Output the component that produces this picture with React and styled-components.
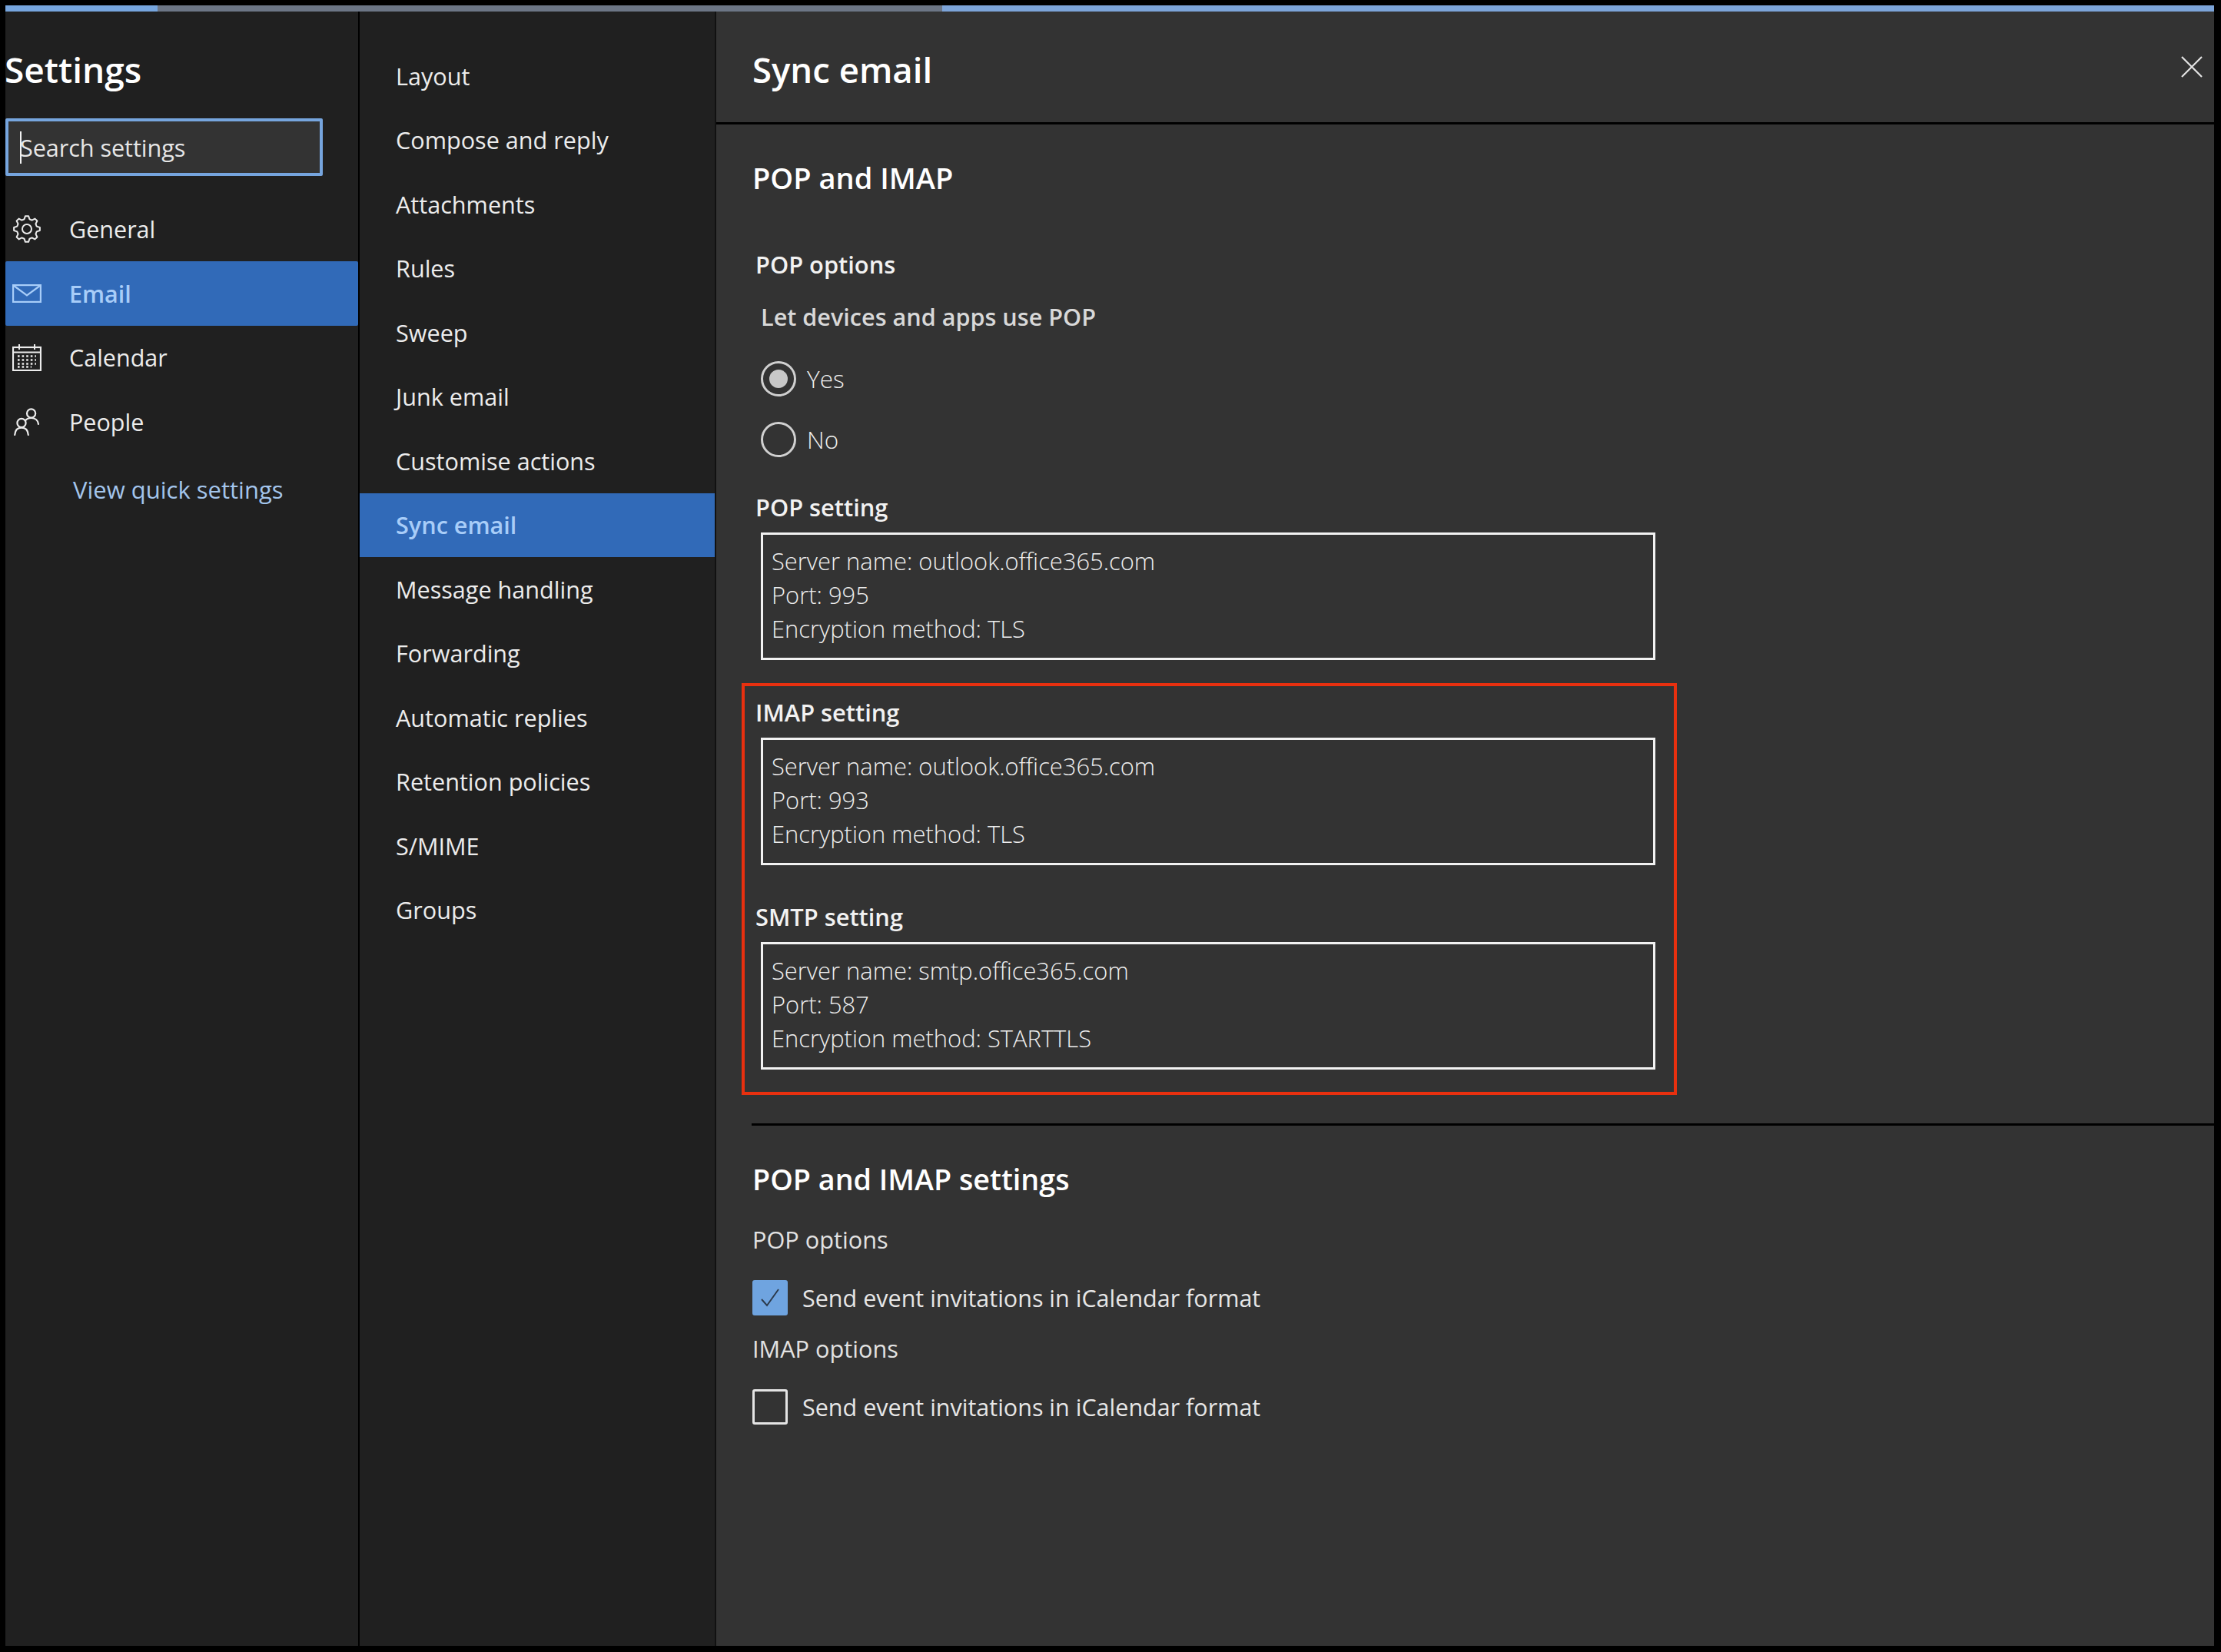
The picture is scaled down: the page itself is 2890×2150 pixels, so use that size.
import React from "react";
import styled, { createGlobalStyle } from "styled-components";

const Global = createGlobalStyle`
  html, body { margin: 0; padding: 0; background: #000; }
  body { font-family: "Open Sans", "Noto Sans", sans-serif; color: #eee; -webkit-font-smoothing: antialiased; }
  * { box-sizing: border-box; }
`;

const Frame = styled.div`
  width: 2874px;
  height: 2135px;
  margin: 7px 9px 8px 7px;
  display: flex;
  flex-direction: column;
  overflow: hidden;
`;
const ProgressBar = styled.div`
  display: flex;
  height: 8px;
  flex: none;
`;
const ProgressPart = styled.div`
  flex: ${p => (p.$w ? `0 0 ${p.$w}px` : 1)};
  background: ${p => p.$c};
`;
const Columns = styled.div`
  flex: 1;
  display: flex;
  min-height: 0;
`;
const Sidebar = styled.aside`
  flex: 0 0 461px;
  background: #202020;
  border-right: 2px solid #000;
  padding-top: 45px;
`;
const SettingsTitle = styled.h1`
  margin: 0;
  font-size: 46px;
  line-height: 60px;
  font-weight: 600;
  color: #fff;
  white-space: nowrap;
  position: relative;
  left: -1px;
`;
const SearchBox = styled.div`
  position: relative;
  width: 413px;
  height: 75px;
  margin-top: 34px;
  padding-left: 15px;
  display: flex;
  align-items: center;
  background: #333;
  border: 4px solid #76a5de;
  border-radius: 2px;
  font-size: 30.7px;
  letter-spacing: -0.1px;
  color: #e6e6e6;
`;
const Caret = styled.span`
  position: absolute;
  left: 15px;
  top: 13px;
  width: 2px;
  height: 42px;
  background: #f2f2f2;
`;
const PrimaryNav = styled.nav`
  margin-top: 27.5px;
`;
const NavRow = styled.div`
  height: 83.5px;
  display: flex;
  align-items: center;
  gap: 36px;
  padding-left: 9px;
  font-size: 30.5px;
  border-radius: 2px;
  background: ${p => (p.$active ? "#316ab8" : "transparent")};
  color: ${p => (p.$active ? "#a8cdf8" : "#ececec")};
  font-weight: ${p => (p.$active ? 600 : 400)};
  white-space: nowrap;
`;
const IconSlot = styled.span`
  flex: 0 0 38px;
  width: 38px;
  height: 40px;
  display: flex;
  align-items: center;
  justify-content: center;
  color: inherit;
  & svg { display: block; }
`;
const QuickLink = styled.div`
  height: 83.5px;
  margin-top: 5px;
  padding-left: 88px;
  display: flex;
  align-items: center;
  font-size: 31px;
  color: #a3c5ec;
  white-space: nowrap;
`;
const SubNav = styled.nav`
  flex: 0 0 462px;
  background: #202020;
  padding-top: 42px;
`;
const SubRow = styled.div`
  height: 83.5px;
  padding-left: 47px;
  display: flex;
  align-items: center;
  font-size: 30.6px;
  background: ${p => (p.$active ? "#316ab8" : "transparent")};
  color: ${p => (p.$active ? "#a8cdf8" : "#ececec")};
  font-weight: ${p => (p.$active ? 600 : 400)};
  white-space: nowrap;
`;
const Main = styled.main`
  flex: 1;
  min-width: 0;
  background: #333;
  border-left: 2px solid #111;
  color: #eaeaea;
`;
const MainHeader = styled.header`
  height: 147px;
  padding: 43px 15px 0 47px;
  display: flex;
  align-items: flex-start;
  justify-content: space-between;
  border-bottom: 3px solid #000;
`;
const MainTitle = styled.h2`
  margin: 0;
  font-size: 45.5px;
  line-height: 64px;
  font-weight: 600;
  color: #fff;
`;
const CloseButton = styled.button`
  margin-top: 15px;
  padding: 0;
  width: 28px;
  height: 28px;
  border: none;
  background: none;
  color: #e4e4e4;
  & svg { display: block; }
`;
const Content = styled.div`
  padding: 44px 0 0 47px;
`;
const SectionTitle = styled.h3`
  margin: ${p => p.$top || 0}px 0 0;
  font-size: ${p => p.$size}px;
  line-height: 50px;
  font-weight: 600;
  color: #fff;
`;
const StrongLabel = styled.div`
  margin: ${p => p.$top || 0}px 0 0 ${p => p.$left ?? 4}px;
  font-size: 30.8px;
  line-height: 44px;
  font-weight: 600;
  color: #f2f2f2;
`;
const MediumLabel = styled.div`
  margin: ${p => p.$top || 0}px 0 0 11px;
  font-size: 30.6px;
  line-height: 44px;
  font-weight: 600;
  color: #d8d8d8;
`;
const RadioGroup = styled.div`
  margin: 35px 0 0 11px;
  display: flex;
  flex-direction: column;
  gap: 31px;
`;
const RadioRow = styled.label`
  height: 48px;
  display: flex;
  align-items: center;
  gap: 14px;
  font-size: 31.5px;
  line-height: 46px;
  font-weight: 300;
  color: #eee;
`;
const RadioCircle = styled.span`
  width: 46px;
  height: 46px;
  flex: none;
  border: 3px solid #d0d0d0;
  border-radius: 50%;
  display: flex;
  align-items: center;
  justify-content: center;
`;
const RadioDot = styled.span`
  width: 24px;
  height: 24px;
  border-radius: 50%;
  background: #c8c8c8;
`;
const InfoBox = styled.div`
  width: 1164px;
  height: 166px;
  margin: 11px 0 0 ${p => p.$left ?? 11}px;
  padding: 12px 0 0 11px;
  border: 3px solid #f2f2f2;
  font-size: 30.9px;
  line-height: 44px;
  font-weight: 300;
  color: #eee;
`;
const InfoLine = styled.div`
  white-space: nowrap;
`;
const HighlightFrame = styled.div`
  width: 1217px;
  height: 536px;
  margin: 30px 0 0 -14px;
  padding: 12px 0 0 14px;
  border: 4px solid #e8300f;
`;
const Divider = styled.hr`
  height: 3px;
  margin: 37px 0 0 -1px;
  border: none;
  background: #000;
`;
const OptionHeading = styled.div`
  margin-top: ${p => p.$top}px;
  font-size: 30.7px;
  line-height: 44px;
  font-weight: 400;
  color: #e2e2e2;
`;
const CheckRow = styled.label`
  height: 46px;
  margin-top: ${p => p.$top}px;
  display: flex;
  align-items: center;
  gap: 19px;
  font-size: 30.5px;
  color: #e6e6e6;
`;
const CheckBox = styled.span`
  width: 46px;
  height: 46px;
  flex: none;
  display: flex;
  align-items: center;
  justify-content: center;
  border-radius: 3px;
  border: 3px solid ${p => (p.$checked ? "#6fa4e0" : "#e4e4e4")};
  background: ${p => (p.$checked ? "#6fa4e0" : "transparent")};
`;

const gearPath = () => {
  const pt = (r, deg) => {
    const a = ((deg - 90) * Math.PI) / 180;
    return `${(18 + r * Math.cos(a)).toFixed(2)} ${(18 + r * Math.sin(a)).toFixed(2)}`;
  };
  let d = "";
  for (let k = 0; k < 8; k++) {
    const a = k * 45;
    d += `${k ? "L" : "M"}${pt(13.2, a - 15)} L${pt(17, a - 7)} L${pt(17, a + 7)} L${pt(13.2, a + 15)} `;
  }
  return d + "Z";
};
const GearIcon = () => (
  <svg width="36" height="36" viewBox="0 0 36 36" fill="none" stroke="currentColor" strokeWidth="2" strokeLinejoin="round">
    <path d={gearPath()} />
    <circle cx="18" cy="18" r="6" />
  </svg>
);
const MailIcon = () => (
  <svg width="38" height="24" viewBox="0 0 38 24" fill="none" stroke="currentColor" strokeWidth="2.2">
    <rect x="1.1" y="1.1" width="35.8" height="21.8" />
    <path d="M1.5 1.5 19 14.5 36.5 1.5" />
  </svg>
);
const CalendarIcon = () => (
  <svg width="38" height="36" viewBox="0 0 38 36" fill="none" stroke="currentColor" strokeWidth="2">
    <rect x="1" y="5" width="36" height="30" strokeWidth="2.2" />
    <path d="M1 11.5H37" />
    <path d="M9 1V8M29 1V8" />
    <path d="M7 16.5H31M7 21.5H31M7 26.5H31M7 30.5H25" strokeWidth="2.6" strokeDasharray="2.6 3" />
  </svg>
);
const PeopleIcon = () => (
  <svg width="34" height="36" viewBox="0 0 34 36" fill="none" stroke="currentColor" strokeWidth="2.2" strokeLinecap="round">
    <circle cx="10" cy="19.5" r="5.6" />
    <path d="M1.2 35C1.6 29 5 25.6 10 25.6S18.4 29 18.8 35" />
    <circle cx="22.6" cy="7" r="5.6" />
    <path d="M15 16.5C16.4 14.2 19 13 22.6 13C27.6 13 31.4 16 32 21" />
  </svg>
);
const CloseIcon = () => (
  <svg width="28" height="28" viewBox="0 0 28 28" stroke="currentColor" strokeWidth="2.2">
    <path d="M1 1 27 27M27 1 1 27" />
  </svg>
);
const CheckIcon = () => (
  <svg width="28" height="26" viewBox="0 0 28 26" fill="none" stroke="#2c3a4c" strokeWidth="2">
    <path d="M3 15 10 23 25 2" />
  </svg>
);

const primary = [
  { label: "General", icon: <GearIcon /> },
  { label: "Email", icon: <MailIcon />, active: true },
  { label: "Calendar", icon: <CalendarIcon /> },
  { label: "People", icon: <PeopleIcon /> },
];
const secondary = ["Layout", "Compose and reply", "Attachments", "Rules", "Sweep", "Junk email", "Customise actions", "Sync email", "Message handling", "Forwarding", "Automatic replies", "Retention policies", "S/MIME", "Groups"];

const Info = ({ left, server, port, method }) => (
  <InfoBox $left={left}>
    <InfoLine>Server name: {server}</InfoLine>
    <InfoLine>Port: {port}</InfoLine>
    <InfoLine>Encryption method: {method}</InfoLine>
  </InfoBox>
);

export default function App() {
  return (
    <>
      <Global />
      <Frame>
        <ProgressBar>
          <ProgressPart $w={198} $c="#76a5de" />
          <ProgressPart $w={1021} $c="#6c7686" />
          <ProgressPart $c="#7ca4d9" />
        </ProgressBar>
        <Columns>
          <Sidebar>
            <SettingsTitle>Settings</SettingsTitle>
            <SearchBox>
              <Caret />
              Search settings
            </SearchBox>
            <PrimaryNav>
              {primary.map(item => (
                <NavRow key={item.label} $active={item.active}>
                  <IconSlot>{item.icon}</IconSlot>
                  {item.label}
                </NavRow>
              ))}
            </PrimaryNav>
            <QuickLink>View quick settings</QuickLink>
          </Sidebar>
          <SubNav>
            {secondary.map(label => (
              <SubRow key={label} $active={label === "Sync email"}>{label}</SubRow>
            ))}
          </SubNav>
          <Main>
            <MainHeader>
              <MainTitle>Sync email</MainTitle>
              <CloseButton aria-label="Close"><CloseIcon /></CloseButton>
            </MainHeader>
            <Content>
              <SectionTitle $size={38}>POP and IMAP</SectionTitle>
              <StrongLabel $top={66}>POP options</StrongLabel>
              <MediumLabel $top={24}>Let devices and apps use POP</MediumLabel>
              <RadioGroup>
                <RadioRow><RadioCircle><RadioDot /></RadioCircle>Yes</RadioRow>
                <RadioRow><RadioCircle />No</RadioRow>
              </RadioGroup>
              <StrongLabel $top={42}>POP setting</StrongLabel>
              <Info server="outlook.office365.com" port="995" method="TLS" />
              <HighlightFrame>
                <StrongLabel $left={0}>IMAP setting</StrongLabel>
                <Info left={7} server="outlook.office365.com" port="993" method="TLS" />
                <StrongLabel $left={0} $top={45}>SMTP setting</StrongLabel>
                <Info left={7} server="smtp.office365.com" port="587" method="STARTTLS" />
              </HighlightFrame>
              <Divider />
              <SectionTitle $size={37.7} $top={45}>POP and IMAP settings</SectionTitle>
              <OptionHeading $top={31}>POP options</OptionHeading>
              <CheckRow $top={31}>
                <CheckBox $checked><CheckIcon /></CheckBox>
                Send event invitations in iCalendar format
              </CheckRow>
              <OptionHeading $top={21}>IMAP options</OptionHeading>
              <CheckRow $top={31}>
                <CheckBox />
                Send event invitations in iCalendar format
              </CheckRow>
            </Content>
          </Main>
        </Columns>
      </Frame>
    </>
  );
}
